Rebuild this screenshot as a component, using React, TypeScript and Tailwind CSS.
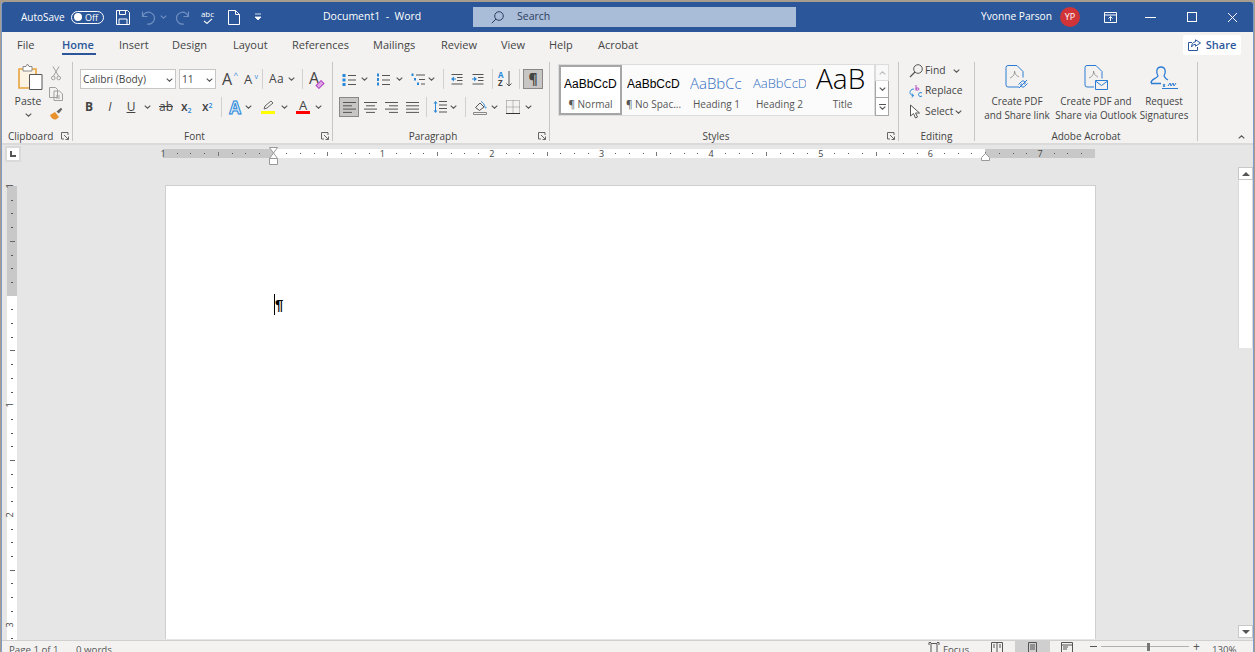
import type { ReactNode } from 'react';

const TABS = [
  ['File', 'w-[45px]'],
  ['Insert', 'w-[53px]'],
  ['Design', 'w-[61px]'],
  ['Layout', 'w-[59px]'],
  ['References', 'w-[81px]'],
  ['Mailings', 'w-[68px]'],
  ['Review', 'w-[60px]'],
  ['View', 'w-[48px]'],
  ['Help', 'w-[49px]'],
  ['Acrobat', 'w-[60px]'],
];

function Chev({ className = '', color = '#555' }: { className?: string; color?: string }) {
  return (
    <svg viewBox="0 0 7 4" className={`h-[4px] w-[7px] shrink-0 ${className}`} fill="none" stroke={color} strokeWidth="1.1">
      <path d="M.7.6 3.5 3.2 6.3.6" />
    </svg>
  );
}

function Ico({ w, h, className = '', children }: { w: number; h: number; className?: string; children: ReactNode }) {
  return (
    <svg viewBox={`0 0 ${w} ${h}`} width={w} height={h} className={`shrink-0 ${className}`} fill="none">
      {children}
    </svg>
  );
}

function Divider({ className = '' }: { className?: string }) {
  return <div className={`h-[20px] w-px shrink-0 bg-[#d2d0ce] ${className}`} />;
}

function Launcher({ className = '' }: { className?: string }) {
  return (
    <svg viewBox="0 0 8 8" className={`absolute h-[8px] w-[8px] ${className}`} fill="none" stroke="#666" strokeWidth="1">
      <path d="M7 3V.5H.5V7H3M3 3l4.5 4.5M7.5 4.5v3h-3" />
    </svg>
  );
}

function Lines({ rows, className = '' }: { rows: number[][]; className?: string }) {
  return (
    <Ico w={13} h={13} className={className}>
      {rows.map(([x1, x2], i) => (
        <path key={i} d={`M${x1} ${1.5 + i * 3.3}H${x2}`} stroke="#555" strokeWidth="1" />
      ))}
    </Ico>
  );
}

function HRuler() {
  const cell = (i: number) => {
    const inch = i % 8 === 0;
    const half = i % 4 === 0;
    const n = Math.abs(i / 8 - 1);
    return (
      <div key={i} className="flex h-[9px] w-[13.71px] shrink-0 items-center">
        {inch ? (
          i === 8 ? null : <span className="-translate-x-1/2 text-[9px] leading-none text-[#444]">{n}</span>
        ) : half ? (
          <span className="h-[4px] w-px bg-[#777]" />
        ) : (
          <span className="h-px w-px bg-[#555]" />
        )}
      </div>
    );
  };
  const cells = Array.from({ length: 68 }, (_, i) => cell(i));
  return (
    <div className="flex h-[9px]">
      <div className="flex bg-[#c8c8c8]">{cells.slice(0, 8)}</div>
      <div className="flex bg-white">{cells.slice(8, 60)}</div>
      <div className="flex bg-[#c8c8c8]">{cells.slice(60)}</div>
    </div>
  );
}

function VRuler() {
  const cell = (i: number) => {
    const inch = i % 8 === 0;
    const half = i % 4 === 0;
    const n = Math.abs(i / 8 - 1);
    return (
      <div key={i} className="flex h-[13.71px] w-[10px] shrink-0 justify-center">
        {inch ? (
          i === 8 ? null : <span className="-translate-y-1/2 -rotate-90 text-[9px] leading-none text-[#444]">{n}</span>
        ) : half ? (
          <span className="h-px w-[5px] bg-[#666]" />
        ) : (
          <span className="h-px w-[2px] bg-[#555]" />
        )}
      </div>
    );
  };
  const cells = Array.from({ length: 34 }, (_, i) => cell(i));
  return (
    <div className="ml-[5px] mt-[24px] flex w-[10px] flex-col">
      <div className="flex flex-col bg-[#c8c8c8]">{cells.slice(0, 8)}</div>
      <div className="flex flex-col bg-white">{cells.slice(8)}</div>
    </div>
  );
}

function StyleItem({ preview, label, selected, className = '' }: { preview: ReactNode; label: string; selected?: boolean; className?: string }) {
  return (
    <div className={`flex h-[50px] w-[63px] shrink-0 flex-col items-center overflow-hidden ${selected ? 'border-2 border-[#a6a6a6]' : 'border-2 border-transparent'} ${className}`}>
      <div className="flex h-[29px] w-[53px] items-end overflow-hidden whitespace-nowrap">{preview}</div>
      <div className="mt-[1px] whitespace-nowrap text-[10px] leading-[14px] text-[#555]">{label}</div>
    </div>
  );
}

function AcrobatBtn({ icon, lines, className = '' }: { icon: ReactNode; lines: string[]; className?: string }) {
  return (
    <div className={`flex shrink-0 flex-col items-center ${className}`}>
      <div className="mt-[3px] h-[26px]">{icon}</div>
      <div className="mt-[3px] whitespace-nowrap text-center text-[9.9px] leading-[14px] text-[#444]">
        {lines.map((l) => (
          <div key={l}>{l}</div>
        ))}
      </div>
    </div>
  );
}

export default function App() {
  return (
    <div className="h-[652px] w-[1255px] overflow-hidden bg-[#a89c8c] px-px pt-[2px] font-['Open_Sans',sans-serif]">
      <div className="flex h-[650px] flex-col border-x border-[#7f9bc8]">
        {/* title bar */}
        <div className="flex h-[30px] shrink-0 items-center rounded-t-[3px] bg-[#2b579a] text-white">
          <span className="ml-[19px] w-[50px] text-[10px]">AutoSave</span>
          <div className="flex h-[13px] w-[33px] shrink-0 items-center rounded-full border border-white pl-[2px]">
            <span className="h-[8px] w-[8px] rounded-full bg-white" />
            <span className="ml-[3px] text-[9px] leading-none">Off</span>
          </div>
          <Ico w={14} h={15} className="ml-[12px]">
            <path d="M.5.5h11l2 2v12H.5z M3.500.5v4h6v-4 M3 14.500V9h8v5.500" stroke="#fff" />
          </Ico>
          <Ico w={15} h={15} className="ml-[11px]">
            <path d="M1.500 1.500v5h5M1.800 6.200A6 6 0 1 1 6 14" stroke="#6f8fc0" strokeWidth="1.2" />
          </Ico>
          <Chev className="ml-[4px]" color="#6f8fc0" />
          <Ico w={15} h={15} className="ml-[8px]">
            <path d="M13.500 1.500v5h-5M13.200 6.200A6 6 0 1 0 9 14" stroke="#6f8fc0" strokeWidth="1.2" />
          </Ico>
          <div className="ml-[11px] flex w-[13px] shrink-0 flex-col items-center text-[8px] leading-[8px]">
            <span>abc</span>
            <svg viewBox="0 0 10 6" className="h-[6px] w-[10px]" fill="none" stroke="#fff" strokeWidth="1.1">
              <path d="M1 3l3 2.400L9 .8" />
            </svg>
          </div>
          <Ico w={12} h={15} className="ml-[14px]">
            <path d="M.5.5h7l4 4v10H.5zM7.500.5v4h4" stroke="#fff" />
          </Ico>
          <Ico w={8} h={8} className="ml-[14px]">
            <path d="M1 1h6M1 4l3 3 3-3z" stroke="#fff" fill="#fff" strokeWidth=".8" />
          </Ico>
          <span className="ml-[61px] w-[150px] whitespace-nowrap text-[10.5px]">Document1 &nbsp;-&nbsp; Word</span>
          <div className="flex h-[20px] w-[323px] shrink-0 items-center bg-[#a9bcd8] text-[#2b3f5f]">
            <svg viewBox="0 0 13 13" className="ml-[18px] h-[13px] w-[13px]" fill="none" stroke="#2b3f5f" strokeWidth="1">
              <circle cx="8" cy="5" r="4.3" />
              <path d="M5 8 .8 12.200" />
            </svg>
            <span className="ml-[13px] text-[10.5px]">Search</span>
          </div>
          <span className="ml-[185px] w-[70px] whitespace-nowrap text-[10.2px]">Yvonne Parson</span>
          <div className="ml-[9px] flex h-[20px] w-[20px] shrink-0 items-center justify-center rounded-full bg-[#d13438] text-[9px]">YP</div>
          <Ico w={13} h={11} className="ml-[24px]">
            <path d="M.5.5h12v10H.5zM.5 3h12M6.500 9V4.500M4.500 6.500l2-2 2 2" stroke="#fff" />
          </Ico>
          <div className="ml-[28px] h-px w-[11px] shrink-0 bg-white" />
          <div className="ml-[31px] h-[10px] w-[10px] shrink-0 border border-white" />
          <Ico w={11} h={11} className="ml-[30px]">
            <path d="M1 1l9 9M10 1l-9 9" stroke="#fff" />
          </Ico>
        </div>

        {/* tabs */}
        <div className="flex h-[28px] shrink-0 items-center bg-[#f3f2f1] pb-[2px] pl-[15px] text-[11px] text-[#444]">
          <span className={TABS[0][1]}>{TABS[0][0]}</span>
          <div className="relative flex h-[26px] w-[57px] items-center font-semibold text-[#2b579a]">
            Home
            <span className="absolute bottom-[3px] left-0 h-[2px] w-[34px] bg-[#2b579a]" />
          </div>
          {TABS.slice(1).map(([t, w]) => (
            <span key={t} className={w}>{t}</span>
          ))}
          <div className="ml-auto mr-[12px] flex h-[20px] w-[58px] items-center justify-center gap-[5px] rounded-[2px] bg-white text-[#2b579a]">
            <svg viewBox="0 0 13 12" className="h-[12px] w-[13px]" fill="none" stroke="#2b579a">
              <path d="M4 3.500H.5v8h9V8M7.500.8l5 3.200-5 3.200V5.400C5 5.400 4 7 3.600 8 3.600 5 5 3 7.500 2.800z" />
            </svg>
            <span className="font-semibold">Share</span>
          </div>
        </div>

        {/* ribbon */}
        <div className="flex h-[83px] shrink-0 bg-[#f3f2f1] text-[#444]">
          {/* clipboard */}
          <div className="relative my-[2px] flex h-[79px] w-[71px] shrink-0 flex-col border-r border-[#c8c6c4]">
            <div className="flex h-[63px]">
              <div className="ml-[12px] flex w-[28px] flex-col items-center">
                <Ico w={26} h={28} className="ml-[4px] mt-[1px]">
                  <path d="M2 6h17v19H2z" fill="#fdf3e3" stroke="#e8a33d" strokeWidth="1.6" />
                  <path d="M6 3.500h3L10.500 1 12 3.500h3V8H6z" fill="#fff" stroke="#888" />
                  <path d="M12.500 11.500h12.500v15H12.500z" fill="#fff" stroke="#555" />
                </Ico>
                <span className="mt-[3px] text-[10.5px] leading-[14px]">Paste</span>
                <Chev className="mt-[5px]" />
              </div>
              <div className="ml-[7px] flex flex-col items-center">
                <Ico w={10} h={15} className="mt-[4px]">
                  <path d="M2 .5 7.500 10M8 .5 2.500 10" stroke="#a19f9d" />
                  <circle cx="2.3" cy="12" r="1.8" stroke="#a19f9d" />
                  <circle cx="7.7" cy="12" r="1.8" stroke="#a19f9d" />
                </Ico>
                <Ico w={14} h={14} className="mt-[6px]">
                  <path d="M.5.5h6l2 2v8h-8zM5 4h5.500l3 3v6.500H5z" stroke="#a19f9d" fill="#f3f2f1" />
                  <path d="M7 9h4M7 11h4" stroke="#a19f9d" />
                </Ico>
                <Ico w={14} h={13} className="mt-[6px]">
                  <path d="M1 8l5-3 4 5-3 2.500C4 13 2 11 1 8z" fill="#e8912d" />
                  <path d="M7.500 4.500 12 .8l1.300 1.500-3.500 4.200z" fill="#666" />
                </Ico>
              </div>
            </div>
            <div className="-mb-[2px] mt-auto flex h-[14px] pl-[6px] text-[10px] leading-[14px]">Clipboard</div>
            <Launcher className="bottom-[1px] right-[3px]" />
          </div>

          {/* font */}
          <div className="relative my-[2px] flex h-[79px] w-[260px] shrink-0 flex-col border-r border-[#c8c6c4]">
            <div className="mt-[7px] flex h-[20px] items-center">
              <div className="ml-[7px] flex h-[20px] w-[96px] shrink-0 items-center justify-between border border-[#c8c6c4] bg-white pl-[2px] pr-[2px] pt-px text-[10.2px]">
                Calibri (Body)<Chev />
              </div>
              <div className="ml-[3px] flex h-[20px] w-[37px] shrink-0 items-center justify-between border border-[#c8c6c4] bg-white pl-[2px] pr-[2px] pt-px text-[10.2px]">
                11<Chev />
              </div>
              <div className="relative ml-[6px] w-[14px] shrink-0 text-[16px] leading-none">
                A<span className="absolute -right-[2px] top-0 text-[8px] leading-none text-[#2b88d8]">^</span>
              </div>
              <div className="relative ml-[8px] w-[12px] shrink-0 text-[13px] leading-none">
                A<span className="absolute -right-[2px] top-0 text-[7px] leading-none text-[#2b88d8]">v</span>
              </div>
              <Divider className="ml-[6px]" />
              <span className="ml-[6px] w-[17px] shrink-0 text-[12px] tracking-wide">Aa</span>
              <Chev className="ml-[2px]" />
              <Divider className="ml-[7px]" />
              <div className="relative ml-[6px] h-[18px] w-[15px] shrink-0 text-[16px] leading-none">
                A
                <span className="absolute bottom-[1px] right-0 h-[5px] w-[8px] -rotate-45 border border-[#b146c2] bg-[#dca7e3]" />
              </div>
            </div>
            <div className="mt-[8px] flex h-[20px] items-center text-[12px]">
              <span className="ml-[10px] w-[12px] shrink-0 text-center font-bold leading-none">B</span>
              <span className="ml-[9px] w-[12px] shrink-0 text-center italic leading-none">I</span>
              <span className="ml-[9px] w-[12px] shrink-0 text-center leading-none underline">U</span>
              <Chev className="ml-[7px]" />
              <span className="ml-[7px] w-[16px] shrink-0 text-center leading-none line-through">ab</span>
              <span className="ml-[7px] w-[14px] shrink-0 font-semibold leading-none">x<sub className="text-[7px] text-[#2b88d8]">2</sub></span>
              <span className="ml-[7px] w-[14px] shrink-0 font-semibold leading-none">x<sup className="text-[7px] text-[#2b88d8]">2</sup></span>
              <Divider className="ml-[5px]" />
              <span className="ml-[6px] w-[14px] shrink-0 text-center text-[17px] font-bold leading-none text-[#d5e8f8] [-webkit-text-stroke:1px_#2b88d8]">A</span>
              <Chev className="ml-[3px]" />
              <div className="ml-[9px] flex w-[14px] shrink-0 flex-col items-center">
                <Ico w={12} h={11}>
                  <path d="M2 9l1-3 6-5 2 2-6 5z" stroke="#666" />
                </Ico>
                <span className="h-[3px] w-[14px] bg-[#ffff00]" />
              </div>
              <Chev className="ml-[6px]" />
              <div className="ml-[8px] flex w-[14px] shrink-0 flex-col items-center text-[13px] leading-[11px]">
                A
                <span className="h-[3px] w-[14px] bg-[#ff0000]" />
              </div>
              <Chev className="ml-[5px]" />
            </div>
            <div className="-mb-[2px] mt-auto h-[14px] pr-[16px] text-center text-[10px] leading-[14px]">Font</div>
            <Launcher className="bottom-[1px] right-[3px]" />
          </div>

          {/* paragraph */}
          <div className="relative my-[2px] flex h-[79px] w-[217px] shrink-0 flex-col border-r border-[#c8c6c4]">
            <div className="mt-[7px] flex h-[20px] items-center">
              <Ico w={14} h={13} className="ml-[9px]">
                <path d="M.5 1h3v3h-3zM.5 5.500h3v3h-3zM.5 10h3v3h-3z" fill="#2b88d8" />
                <path d="M6 2.500h8M6 7h8M6 11.500h8" stroke="#555" />
              </Ico>
              <Chev className="ml-[5px]" />
              <Ico w={14} h={13} className="ml-[8px]">
                <path d="M1 .5h2v3H1zM1 5h2v3H1zM1 9.500h2v3H1z" fill="#2b88d8" />
                <path d="M6 2.500h8M6 7h8M6 11.500h8" stroke="#555" />
              </Ico>
              <Chev className="ml-[6px]" />
              <Ico w={14} h={13} className="ml-[8px]">
                <path d="M.5 .5h2v2.500h-2zM3 5h2v2.500H3zM6 9.500h2V12H6z" fill="#2b88d8" />
                <path d="M5 2h9M8 6.500h6M10 11h4" stroke="#555" />
              </Ico>
              <Chev className="ml-[3px]" />
              <Divider className="ml-[8px]" />
              <Ico w={12} h={11} className="ml-[7px]">
                <path d="M.5 .5h11M6 3.500h5.500M6 6.500h5.500M.5 10h11" stroke="#555" />
                <path d="M0 5l3-2.500v5z M3 4.500h2v1H3z" fill="#2b88d8" />
              </Ico>
              <Ico w={12} h={11} className="ml-[9px]">
                <path d="M.5 .5h11M6 3.500h5.500M6 6.500h5.500M.5 10h11" stroke="#555" />
                <path d="M5 5 2 2.500v5zM0 4.500h2v1H0z" fill="#2b88d8" />
              </Ico>
              <Divider className="ml-[8px]" />
              <div className="ml-[5px] flex w-[14px] shrink-0 items-center">
                <div className="flex w-[8px] flex-col text-[8px] font-bold leading-[8px]">
                  <span className="text-[#2b88d8]">A</span>
                  <span>Z</span>
                </div>
                <Ico w={6} h={16}>
                  <path d="M3 0v15M.5 12.500 3 15l2.500-2.500" stroke="#555" />
                </Ico>
              </div>
              <Divider className="ml-[7px]" />
              <div className="ml-[3px] flex h-[20px] w-[20px] shrink-0 items-center justify-center border border-[#8a8886] bg-[#c8c6c4] text-[14px] font-bold leading-none text-[#444]">¶</div>
            </div>
            <div className="mt-[8px] flex h-[20px] items-center">
              <div className="ml-[6px] flex h-[20px] w-[20px] shrink-0 items-center justify-center border border-[#8a8886] bg-[#c8c6c4]">
                <Lines rows={[[0, 13], [0, 9], [0, 13], [0, 9]]} />
              </div>
              <Lines className="ml-[5px]" rows={[[0, 13], [2, 11], [0, 13], [2, 11]]} />
              <Lines className="ml-[8px]" rows={[[0, 13], [4, 13], [0, 13], [4, 13]]} />
              <Lines className="ml-[8px]" rows={[[0, 13], [0, 13], [0, 13], [0, 13]]} />
              <Divider className="ml-[7px]" />
              <Ico w={14} h={14} className="ml-[6px]">
                <path d="M2.500 1 .5 3.500h4zM2.500 13 .5 10.500h4z" fill="#2b88d8" />
                <path d="M2.500 3v8" stroke="#2b88d8" />
                <path d="M6 1.500h8M6 5h8M6 8.500h8M6 12h8" stroke="#555" />
              </Ico>
              <Chev className="ml-[3px]" />
              <Divider className="ml-[8px]" />
              <Ico w={14} h={15} className="ml-[7px]">
                <path d="M2.500 7.500 7 3l4 4-4.500 3.500z" stroke="#555" />
                <path d="M8 1.500c2 1 3.500 3 4 5.500 0 1 1 1.500 1.500.5" stroke="#2b88d8" />
                <path d="M.5 12.500h13v2H.5z" stroke="#888" />
              </Ico>
              <Chev className="ml-[4px]" />
              <Ico w={14} h={14} className="ml-[8px]">
                <path d="M.5.500h13v13M.5.500v13M7 .500v13M.5 7h13" stroke="#888" strokeDasharray="1 1" />
                <path d="M0 13.500h14" stroke="#333" />
              </Ico>
              <Chev className="ml-[5px]" />
            </div>
            <div className="-mb-[2px] mt-auto h-[14px] pr-[16px] text-center text-[10px] leading-[14px]">Paragraph</div>
            <Launcher className="bottom-[1px] right-[3px]" />
          </div>

          {/* styles */}
          <div className="relative my-[2px] flex h-[79px] w-[349px] shrink-0 flex-col border-r border-[#c8c6c4]">
            <div className="ml-[8px] mt-[2px] flex h-[52px]">
              <div className="flex h-[52px] w-[317px] items-center border border-[#dcdcdc] bg-[#fbfbfb]">
                <StyleItem selected className="bg-white" label="¶ Normal" preview={<span className="mb-[3px] font-['Liberation_Sans',sans-serif] text-[12px] text-black">AaBbCcDc</span>} />
                <StyleItem label="¶ No Spac..." preview={<span className="mb-[3px] font-['Liberation_Sans',sans-serif] text-[12px] text-black">AaBbCcDc</span>} />
                <StyleItem label="Heading 1" preview={<span className="mb-[2px] text-[15px] font-light text-[#2f6bc0]">AaBbCc</span>} />
                <StyleItem label="Heading 2" preview={<span className="mb-[3px] text-[13px] font-light text-[#2f6bc0]">AaBbCcD</span>} />
                <StyleItem label="Title" preview={<span className="-mb-px text-[28px] font-light leading-[38px] text-black">AaB</span>} />
              </div>
              <div className="flex w-[14px] flex-col">
                <div className="flex h-[17px] items-center justify-center border border-[#dcdcdc] bg-[#f8f8f8]"><Chev className="rotate-180" color="#bbb" /></div>
                <div className="flex h-[17px] items-center justify-center border border-t-0 border-[#a6a6a6] bg-white"><Chev /></div>
                <div className="flex h-[18px] flex-col items-center justify-center gap-[1px] border border-t-0 border-[#a6a6a6] bg-white">
                  <span className="h-px w-[7px] bg-[#555]" />
                  <Chev />
                </div>
              </div>
            </div>
            <div className="-mb-[2px] mt-auto h-[14px] pr-[16px] text-center text-[10px] leading-[14px]">Styles</div>
            <Launcher className="bottom-[1px] right-[3px]" />
          </div>

          {/* editing */}
          <div className="relative my-[2px] flex h-[79px] w-[76px] shrink-0 flex-col border-r border-[#c8c6c4] text-[10.3px]">
            <div className="-mt-px ml-[10px] flex flex-col">
              <div className="flex h-[20px] items-center">
                <Ico w={14} h={14}>
                  <circle cx="9" cy="5" r="4.300" stroke="#555" />
                  <path d="M6 8 1 13" stroke="#555" strokeWidth="1.300" />
                </Ico>
                <span className="ml-[2px] w-[28px]">Find</span>
                <Chev />
              </div>
              <div className="flex h-[20px] items-center">
                <Ico w={16} h={14}>
                  <path d="M7 1v5.500M7 5c0-1.500 3-1.500 3 0s-3 1.500-3 0" stroke="#b146c2" />
                  <path d="M5 5C2 5 1 7 1 8.500c0 1.500 1 3 3.500 3M3 9.500l1.500 2-1.500 2" stroke="#2b88d8" />
                  <path d="M13 9c-1-1-3.500-.500-3.500 1.500s2.500 2.500 3.500 1.500" stroke="#2b88d8" />
                </Ico>
                <span>Replace</span>
              </div>
              <div className="flex h-[21px] items-center">
                <Ico w={12} h={15} className="mr-[4px]">
                  <path d="M1.500 1v11l3-2.500 2 4.500 2-1-2-4h4z" stroke="#555" fill="#fff" />
                </Ico>
                <span>Select</span>
                <Chev className="ml-[2px]" />
              </div>
            </div>
            <div className="-mb-[2px] mt-auto h-[14px] text-center text-[10px] leading-[14px]">Editing</div>
          </div>

          {/* adobe acrobat */}
          <div className="relative my-[2px] flex h-[79px] w-[223px] shrink-0 flex-col border-r border-[#c8c6c4]">
            <div className="flex h-[63px]">
              <AcrobatBtn
                className="ml-[7px] w-[70px]"
                lines={['Create PDF', 'and Share link']}
                icon={
                  <Ico w={24} h={26}>
                    <path d="M14 22H3a2 2 0 0 1-2-2V2.500a2 2 0 0 1 2-2h9l6 6v6" stroke="#2b7cd3" />
                    <path d="M5 13c3-1 5-4 4.500-7 .5 3 2 5 4.500 6" stroke="#888" strokeWidth=".8" />
                    <path d="M14 23l8-8M13.500 19.500l3-3a2 2 0 0 1 3 3M22.500 18.500l-3 3a2 2 0 0 1-3-3" stroke="#2b7cd3" />
                  </Ico>
                }
              />
              <AcrobatBtn
                className="ml-[7px] w-[74px]"
                lines={['Create PDF and', 'Share via Outlook']}
                icon={
                  <Ico w={24} h={26}>
                    <path d="M10 22H3a2 2 0 0 1-2-2V2.500a2 2 0 0 1 2-2h9l6 6v7" stroke="#2b7cd3" />
                    <path d="M5 13c3-1 5-4 4.500-7 .5 3 2 5 4.500 6" stroke="#888" strokeWidth=".8" />
                    <path d="M11.500 15.500h12v9h-12zM11.500 16l6 4.500 6-4.500" stroke="#2b7cd3" fill="#f3f2f1" />
                  </Ico>
                }
              />
              <AcrobatBtn
                className="ml-[1px] w-[60px]"
                lines={['Request', 'Signatures']}
                icon={
                  <Ico w={28} h={24}>
                    <path d="M1 18c0-4 5-4 7-7-2-3-2-9 3-9s5 6 3 9c1 2 2 3 4 4M1 18.500h10" stroke="#2b7cd3" strokeWidth="1.300" />
                    <path d="M13 19l2 3M15 19l-2 3M18 21l2-3 1 3 2-3 1 3 2-3" stroke="#2b7cd3" />
                    <path d="M12 23.500h16" stroke="#2b7cd3" />
                  </Ico>
                }
              />
            </div>
            <div className="-mb-[2px] mt-auto h-[14px] text-center text-[10px] leading-[14px]">Adobe Acrobat</div>
          </div>

          <div className="relative flex-1">
            <Chev className="absolute bottom-[4px] right-[8px] rotate-180" />
          </div>
        </div>
        <div className="h-[2px] shrink-0 bg-[#dadada]" />

        {/* document area */}
        <div className="flex min-h-0 flex-1 bg-[#e6e6e6]">
          <div className="w-[161px] shrink-0">
            <div className="ml-[3px] mt-px flex h-[16px] w-[16px] items-center justify-center border-2 border-[#dadada] bg-white">
              <span className="h-[6px] w-[6px] border-b-2 border-l-2 border-[#555]" />
            </div>
            <VRuler />
          </div>
          <div className="flex w-[1073px] shrink-0 flex-col">
            <div className="relative mt-[4px] h-[9px]">
              <HRuler />
              <svg viewBox="0 0 9 18" className="absolute -top-[2px] left-[106px] h-[18px] w-[9px]" fill="#fff" stroke="#999">
                <path d="M.5.500h8L4.500 6zM4.500 6l4 5.500h-8zM.5 11.500h8v6h-8z" />
              </svg>
              <svg viewBox="0 0 9 8" className="absolute left-[818px] top-[4px] h-[8px] w-[9px]" fill="#fff" stroke="#999">
                <path d="M4.500.500l4 4v3h-8v-3z" />
              </svg>
            </div>
            <div className="ml-[2px] mt-[27px] h-[454px] w-[931px] border border-b-0 border-[#cfcfcf] bg-white">
              <div className="ml-[108px] mt-[108px] flex h-[21px] items-start">
                <div className="h-[21px] w-px bg-black" />
                <span className="mt-[1px] font-['Liberation_Sans',sans-serif] text-[15px] font-bold leading-[20px] text-black">¶</span>
              </div>
            </div>
          </div>
          <div className="ml-[2px] flex w-[15px] shrink-0 flex-col bg-[#e6e6e6] pt-[22px]">
            <div className="flex h-[13px] items-center justify-center border border-[#c8c8c8] bg-white">
              <span className="border-x-[4px] border-b-[4px] border-x-transparent border-b-[#555]" />
            </div>
            <div className="h-[168px] w-full border-x border-[#dadada] bg-white" />
            <div className="flex-1" />
            <div className="flex h-[13px] items-center justify-center border border-[#c8c8c8] bg-white">
              <span className="border-x-[4px] border-t-[4px] border-x-transparent border-t-[#555]" />
            </div>
            <div className="h-[2px]" />
          </div>
        </div>

        {/* status bar */}
        <div className="flex h-[12px] shrink-0 items-start overflow-hidden border-t border-[#d0d0d0] bg-[#f3f2f1] text-[9.7px] text-[#555]">
          <span className="ml-[7px] mt-[2px] w-[67px] whitespace-nowrap leading-[14px]">Page 1 of 1</span>
          <span className="mt-[2px] w-[852px] whitespace-nowrap leading-[14px]">0 words</span>
          <Ico w={12} h={11} className="mt-[1px]">
            <path d="M3 1.500v9.500h6V1.500zM1 3V.5h2M11 3V.5H9" stroke="#555" />
          </Ico>
          <span className="ml-[3px] mt-[2px] w-[48px] leading-[14px]">Focus</span>
          <Ico w={12} h={11} className="mt-[1px]">
            <path d="M.5.500h11V11H.5zM6 .5V11M2 3h2M2 5h2M8 3h2M8 5h2" stroke="#555" />
          </Ico>
          <div className="ml-[12px] flex h-[12px] w-[35px] shrink-0 justify-center bg-[#cfcfcf] pt-[1px]">
            <Ico w={9} h={11}>
              <path d="M.5.500h8V11h-8zM2 3h5M2 5h5M2 7h5" stroke="#555" />
            </Ico>
          </div>
          <Ico w={12} h={11} className="ml-[11px] mt-[1px]">
            <path d="M.5.500h11V11H.5zM.5 3h11M2 5h5M2 7h4" stroke="#555" />
          </Ico>
          <div className="ml-[17px] mt-[5px] h-px w-[7px] shrink-0 bg-[#555]" />
          <div className="relative ml-[4px] mt-[5px] h-px w-[88px] shrink-0 bg-[#b0b0b0]">
            <span className="absolute -top-[3px] left-[46px] h-[8px] w-[3px] bg-[#777]" />
          </div>
          <span className="ml-[3px] w-[9px] shrink-0 text-center text-[12px] leading-[11px]">+</span>
          <span className="ml-[11px] mt-[2px] leading-[14px]">130%</span>
        </div>
      </div>
    </div>
  );
}
